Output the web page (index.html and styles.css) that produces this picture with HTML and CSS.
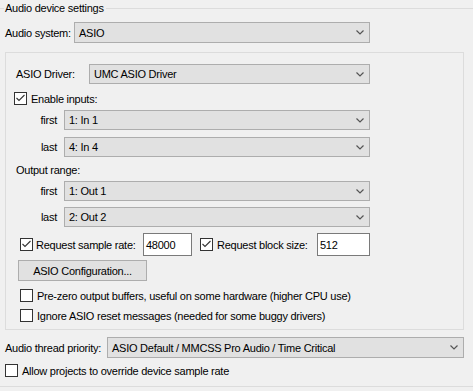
FILE: index.html
```html
<!DOCTYPE html>
<html>
<head>
  <title>Audio device settings</title>
  <link rel="stylesheet" href="styles.css">
</head>
<body>

<fieldset class="settings">
  <legend>Audio device settings</legend>

  <div class="row row-system">
    <span class="label label-system">Audio system:</span>
    <div class="combo combo-system">
      <span>ASIO</span>
      <svg class="chevron" width="8" height="5" viewBox="0 0 8 5"><path d="M0.5 0.5 L4 4 L7.5 0.5" /></svg>
    </div>
  </div>

  <div class="group">
    <div class="row row-driver">
      <span class="label label-driver">ASIO Driver:</span>
      <div class="combo combo-driver">
        <span>UMC ASIO Driver</span>
        <svg class="chevron" width="8" height="5" viewBox="0 0 8 5"><path d="M0.5 0.5 L4 4 L7.5 0.5" /></svg>
      </div>
    </div>

    <label class="check check-inputs">
      <span class="box"><svg width="11" height="11" viewBox="0 0 11 11"><path d="M1.5 5 L4 7.5 L9.5 2" /></svg></span>
      <span>Enable inputs:</span>
    </label>

    <div class="row row-range row-first">
      <span class="label label-range">first</span>
      <div class="combo combo-range">
        <span>1: In 1</span>
        <svg class="chevron" width="8" height="5" viewBox="0 0 8 5"><path d="M0.5 0.5 L4 4 L7.5 0.5" /></svg>
      </div>
    </div>
    <div class="row row-range row-last">
      <span class="label label-range">last</span>
      <div class="combo combo-range">
        <span>4: In 4</span>
        <svg class="chevron" width="8" height="5" viewBox="0 0 8 5"><path d="M0.5 0.5 L4 4 L7.5 0.5" /></svg>
      </div>
    </div>

    <div class="row row-output">Output range:</div>

    <div class="row row-range row-first">
      <span class="label label-range">first</span>
      <div class="combo combo-range">
        <span>1: Out 1</span>
        <svg class="chevron" width="8" height="5" viewBox="0 0 8 5"><path d="M0.5 0.5 L4 4 L7.5 0.5" /></svg>
      </div>
    </div>
    <div class="row row-range row-last-out">
      <span class="label label-range">last</span>
      <div class="combo combo-range">
        <span>2: Out 2</span>
        <svg class="chevron" width="8" height="5" viewBox="0 0 8 5"><path d="M0.5 0.5 L4 4 L7.5 0.5" /></svg>
      </div>
    </div>

    <div class="row row-request">
      <span class="box"><svg width="11" height="11" viewBox="0 0 11 11"><path d="M1.5 5 L4 7.5 L9.5 2" /></svg></span>
      <span class="request-text rate-text">Request sample rate:</span>
      <div class="field field-rate">48000</div>
      <span class="box box-block"><svg width="11" height="11" viewBox="0 0 11 11"><path d="M1.5 5 L4 7.5 L9.5 2" /></svg></span>
      <span class="request-text block-text">Request block size:</span>
      <div class="field field-block">512</div>
    </div>

    <button class="config-button">ASIO Configuration...</button>

    <label class="check check-prezero">
      <span class="box"></span>
      <span>Pre-zero output buffers, useful on some hardware (higher CPU use)</span>
    </label>
    <label class="check check-ignore">
      <span class="box"></span>
      <span>Ignore ASIO reset messages (needed for some buggy drivers)</span>
    </label>
  </div>

  <div class="row row-priority">
    <span class="label label-priority">Audio thread priority:</span>
    <div class="combo combo-priority">
      <span>ASIO Default / MMCSS Pro Audio / Time Critical</span>
      <svg class="chevron" width="8" height="5" viewBox="0 0 8 5"><path d="M0.5 0.5 L4 4 L7.5 0.5" /></svg>
    </div>
  </div>

  <label class="check check-allow">
    <span class="box"></span>
    <span>Allow projects to override device sample rate</span>
  </label>
</fieldset>

</body>
</html>
```

FILE: styles.css
```css
body {
  margin: 0;
  width: 473px;
  height: 391px;
  overflow: hidden;
  background-color: #f0f0f0;
  font-family: 'Liberation Sans', Arial, sans-serif;
  font-size: 11px;
  letter-spacing: -0.25px;
  color: #000;
}

.settings {
  margin: 2px 0 0 0;
  padding: 0 0 9px 5px;
  border: 1px solid #dcdcdc;
  border-left: none;
  border-right: none;
  min-inline-size: 0;
}

.settings legend {
  padding: 0 2px 0 1px;
  margin-left: -1px;
  line-height: 13px;
}

.row {
  display: flex;
  align-items: center;
}

.label {
  white-space: nowrap;
}

/* dropdowns */
.combo {
  display: flex;
  align-items: center;
  justify-content: space-between;
  box-sizing: border-box;
  height: 21px;
  padding: 0 5px 0 4px;
  border: 1px solid #adadad;
  background-color: #e1e1e1;
}

.chevron path {
  fill: none;
  stroke: #555;
  stroke-width: 1.2;
}

.row-system {
  margin-top: 7px;
}

.label-system {
  width: 69px;
}

.combo-system {
  width: 296px;
}

/* inner group */
.group {
  box-sizing: border-box;
  width: 459px;
  margin-top: 9px;
  padding: 11px 0 7px 0;
  border: 1px solid #dcdcdc;
}

.label-driver {
  width: 73px;
  margin-left: 10px;
}

.combo-driver {
  width: 281px;
  height: 20px;
}

.check {
  display: flex;
  align-items: center;
  height: 13px;
}

.box {
  display: inline-flex;
  align-items: center;
  justify-content: center;
  box-sizing: border-box;
  width: 13px;
  height: 13px;
  border: 1px solid #333;
  background-color: #fff;
  flex-shrink: 0;
}

.box path {
  fill: none;
  stroke: #333;
  stroke-width: 1.1;
}

.check .box {
  margin-right: 4px;
}

.check-inputs {
  margin-top: 8px;
  margin-left: 8px;
}

.row-range {
  height: 20px;
}

.row-first {
  margin-top: 5px;
}

.row-last {
  margin-top: 7px;
}

.row-last-out {
  margin-top: 6px;
}

.label-range {
  box-sizing: border-box;
  width: 58px;
  padding-right: 7px;
  text-align: right;
}

.combo-range {
  width: 306px;
  height: 20px;
}

.row-output {
  height: 13px;
  margin-top: 6px;
  margin-left: 10px;
}

/* sample rate / block size */
.row-request {
  height: 23px;
  margin-top: 6px;
  margin-left: 14px;
}

.request-text {
  white-space: nowrap;
}

.rate-text {
  width: 107px;
  margin-left: 3px;
}

.block-text {
  width: 100px;
  margin-left: 4px;
}

.box-block {
  margin-left: 8px;
}

.field {
  display: flex;
  align-items: center;
  box-sizing: border-box;
  height: 23px;
  padding-left: 2px;
  border: 1px solid #7a7a7a;
  background-color: #fff;
}

.field-rate {
  width: 49px;
}

.field-block {
  width: 53px;
}

.config-button {
  display: block;
  box-sizing: border-box;
  width: 129px;
  height: 21px;
  margin: 4px 0 0 12px;
  padding: 0;
  border: 1px solid #adadad;
  background-color: #e1e1e1;
  font-family: inherit;
  font-size: 11px;
  letter-spacing: inherit;
  color: #000;
}

.check-prezero {
  margin-top: 8px;
  margin-left: 14px;
}

.check-ignore {
  margin-top: 7px;
  margin-left: 14px;
}

.row-priority {
  margin-top: 7px;
}

.label-priority {
  width: 102px;
}

.combo-priority {
  width: 357px;
}

.check-allow {
  margin-top: 6px;
}
```
